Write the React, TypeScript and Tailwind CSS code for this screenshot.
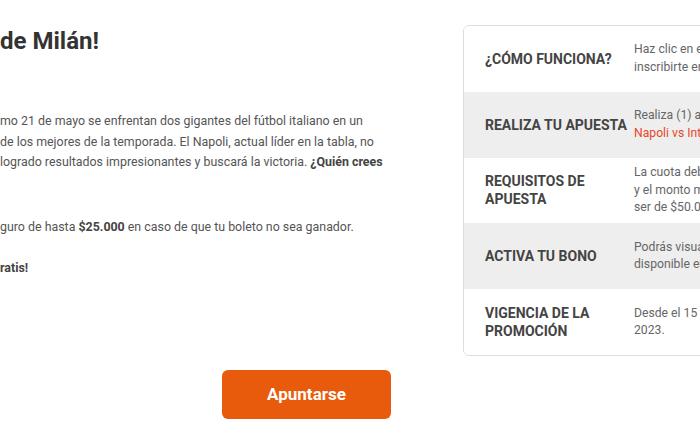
import React from "react";

const rows: { label: string[]; value: React.ReactNode[]; shaded?: boolean }[] = [
  {
    label: ["¿CÓMO FUNCIONA?"],
    value: ["Haz clic en el botón “Apuntarse” para", "inscribirte en la promoción."],
  },
  {
    label: ["REALIZA TU APUESTA"],
    value: [
      "Realiza (1) apuesta simple al partido",
      <>
        <span className="text-[#e8472a]">Napoli vs Inter de Milán</span> en
        Betsson.
      </>,
    ],
    shaded: true,
  },
  {
    label: ["REQUISITOS DE", "APUESTA"],
    value: [
      "La cuota debe ser mínima de 1.50",
      "y el monto mínimo de la apuesta debe",
      "ser de $50.000.",
    ],
  },
  {
    label: ["ACTIVA TU BONO"],
    value: ["Podrás visualizar tu bono de seguro", "disponible en tu cuenta."],
    shaded: true,
  },
  {
    label: ["VIGENCIA DE LA", "PROMOCIÓN"],
    value: ["Desde el 15 hasta el 21 de mayo de", "2023."],
  },
];

const App = () => {
  return (
    <div className="w-[700px] h-[441px] overflow-hidden bg-white font-['Roboto',sans-serif]">
      <div className="flex">
        <section className="w-[463px] shrink-0 pt-[25px]">
          <h1 className="text-[24px] leading-[32px] font-bold text-[#333] whitespace-nowrap">
            de Milán!
          </h1>
          <p className="mt-[54px] text-[12.4px] leading-[20.5px] text-[#555] whitespace-nowrap">
            mo 21 de mayo se enfrentan dos gigantes del fútbol italiano en un
            <br />
            de los mejores de la temporada. El Napoli, actual líder en la tabla, no
            <br />
            logrado resultados impresionantes y buscará la victoria.{" "}
            <b className="text-[#444]">¿Quién crees</b>
            <br />
            <span>&nbsp;</span>
          </p>
          <p className="mt-[24px] text-[12.4px] leading-[20.5px] text-[#555] whitespace-nowrap">
            guro de hasta <b className="text-[#444]">$25.000</b> en caso de que tu
            boleto no sea ganador.
          </p>
          <p className="mt-[20px] text-[12.4px] leading-[20.5px] font-bold text-[#444] whitespace-nowrap">
            ratis!
          </p>
          <button className="mt-[92px] ml-[222px] w-[169px] h-[49px] rounded-[6px] bg-[#e95b0c] text-white text-[17px] font-bold">
            Apuntarse
          </button>
        </section>
        <aside className="pt-[25px] shrink-0">
          <div className="w-[420px] border border-[#dedede] rounded-[6px] overflow-hidden">
            {rows.map((row, i) => (
              <div
                key={i}
                className={`flex items-center h-[65.8px] ${row.shaded ? "bg-[#eeeeee]" : "bg-white"}`}
              >
                <div className="w-[170px] shrink-0 pl-[21px] text-[14px] leading-[18px] font-bold text-[#444]">
                  {row.label.map((l, j) => (
                    <div key={j} className="whitespace-nowrap">
                      {l}
                    </div>
                  ))}
                </div>
                <div className="text-[12.2px] leading-[17.5px] text-[#666]">
                  {row.value.map((v, j) => (
                    <div key={j} className="whitespace-nowrap">
                      {v}
                    </div>
                  ))}
                </div>
              </div>
            ))}
          </div>
        </aside>
      </div>
    </div>
  );
};

export default App;
